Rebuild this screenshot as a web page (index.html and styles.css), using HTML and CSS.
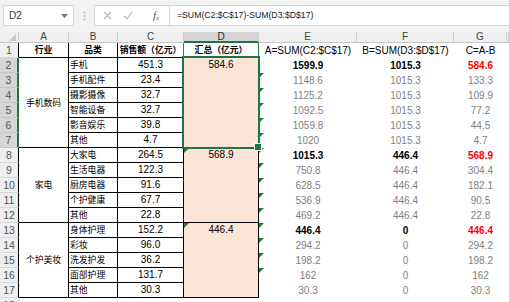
FILE: index.html
```html
<!DOCTYPE html>
<html lang="zh-CN">
<head>
    <meta charset="UTF-8">
    <title>汇总（亿元）</title>
    <link rel="stylesheet" href="styles.css">
</head>
<body>

<div class="toolbar">
    <div class="name-box">
        <span>D2</span>
        <svg width="7" height="4" viewBox="0 0 7 4"><path d="M0 0h7L3.5 4z" fill="#777"/></svg>
    </div>
    <div class="grip">
        <svg width="3" height="10" viewBox="0 0 3 10"><circle cx="1.5" cy="1.5" r="0.9" fill="#b5b5b5"/><circle cx="1.5" cy="5" r="0.9" fill="#b5b5b5"/><circle cx="1.5" cy="8.5" r="0.9" fill="#b5b5b5"/></svg>
    </div>
    <div class="fx-tools">
        <svg class="tool" width="9" height="9" viewBox="0 0 9 9"><path d="M1 1l7 7M8 1L1 8" stroke="#b8b8b8" stroke-width="1.1" fill="none"/></svg>
        <svg class="tool" width="10" height="9" viewBox="0 0 10 9"><path d="M1 5l3 3 5-7" stroke="#b8b8b8" stroke-width="1.1" fill="none"/></svg>
        <span class="fx"><i>f</i><sub>x</sub></span>
    </div>
    <div class="formula">=SUM(C2:$C$17)-SUM(D3:$D$17)</div>
</div>

<div class="sheet">
    <!-- column headers -->
    <div class="hd corner"><span class="corner-tri"></span></div>
    <div class="hd ca">A</div>
    <div class="hd cb">B</div>
    <div class="hd cc">C</div>
    <div class="hd cd on">D</div>
    <div class="hd ce">E</div>
    <div class="hd cf">F</div>
    <div class="hd cg">G</div>
    <div class="hd cx"></div>

    <!-- row 1 -->
    <div class="rh bdr">1</div>
    <div class="cell bd ca zh strong">行业</div>
    <div class="cell bd cb zh strong">品类</div>
    <div class="cell bd cc zh strong">销售额（亿元）</div>
    <div class="cell bd cd zh strong d1">汇总（亿元）</div>
    <div class="cell ce">A=SUM(C2:$C$17)</div>
    <div class="cell cf">B=SUM(D3:$D$17)</div>
    <div class="cell cg">C=A-B</div>

    <!-- 手机数码 -->
    <div class="rh on">2</div>
    <div class="cell bd ca zh group span6">手机数码</div>
    <div class="cell bd cb zh left">手机</div>
    <div class="cell bd cc">451.3</div>
    <div class="cell bd cd total span6 picked">584.6</div>
    <div class="cell ce strong">1599.9</div>
    <div class="cell cf strong">1015.3</div>
    <div class="cell cg strong red">584.6</div>

    <div class="rh on">3</div>
    <div class="cell bd cb zh left">手机配件</div>
    <div class="cell bd cc">23.4</div>
    <div class="cell ce grey flag">1148.6</div>
    <div class="cell cf grey">1015.3</div>
    <div class="cell cg grey">133.3</div>

    <div class="rh on">4</div>
    <div class="cell bd cb zh left">摄影摄像</div>
    <div class="cell bd cc">32.7</div>
    <div class="cell ce grey flag">1125.2</div>
    <div class="cell cf grey">1015.3</div>
    <div class="cell cg grey">109.9</div>

    <div class="rh on">5</div>
    <div class="cell bd cb zh left">智能设备</div>
    <div class="cell bd cc">32.7</div>
    <div class="cell ce grey flag">1092.5</div>
    <div class="cell cf grey">1015.3</div>
    <div class="cell cg grey">77.2</div>

    <div class="rh on">6</div>
    <div class="cell bd cb zh left">影音娱乐</div>
    <div class="cell bd cc">39.8</div>
    <div class="cell ce grey flag">1059.8</div>
    <div class="cell cf grey">1015.3</div>
    <div class="cell cg grey">44.5</div>

    <div class="rh on">7</div>
    <div class="cell bd cb zh left">其他</div>
    <div class="cell bd cc">4.7</div>
    <div class="cell ce grey flag">1020</div>
    <div class="cell cf grey">1015.3</div>
    <div class="cell cg grey">4.7</div>

    <!-- 家电 -->
    <div class="rh bdr">8</div>
    <div class="cell bd ca zh group span5">家电</div>
    <div class="cell bd cb zh left">大家电</div>
    <div class="cell bd cc">264.5</div>
    <div class="cell bd cd total span5 flag">568.9</div>
    <div class="cell ce strong flag">1015.3</div>
    <div class="cell cf strong">446.4</div>
    <div class="cell cg strong red">568.9</div>

    <div class="rh bdr">9</div>
    <div class="cell bd cb zh left">生活电器</div>
    <div class="cell bd cc">122.3</div>
    <div class="cell ce grey flag">750.8</div>
    <div class="cell cf grey">446.4</div>
    <div class="cell cg grey">304.4</div>

    <div class="rh bdr">10</div>
    <div class="cell bd cb zh left">厨房电器</div>
    <div class="cell bd cc">91.6</div>
    <div class="cell ce grey flag">628.5</div>
    <div class="cell cf grey">446.4</div>
    <div class="cell cg grey">182.1</div>

    <div class="rh bdr">11</div>
    <div class="cell bd cb zh left">个护健康</div>
    <div class="cell bd cc">67.7</div>
    <div class="cell ce grey flag">536.9</div>
    <div class="cell cf grey">446.4</div>
    <div class="cell cg grey">90.5</div>

    <div class="rh bdr">12</div>
    <div class="cell bd cb zh left">其他</div>
    <div class="cell bd cc">22.8</div>
    <div class="cell ce grey flag">469.2</div>
    <div class="cell cf grey">446.4</div>
    <div class="cell cg grey">22.8</div>

    <!-- 个护美妆 -->
    <div class="rh bdr">13</div>
    <div class="cell bd ca zh group span5">个护美妆</div>
    <div class="cell bd cb zh left">身体护理</div>
    <div class="cell bd cc">152.2</div>
    <div class="cell bd cd total span5 flag">446.4</div>
    <div class="cell ce strong flag">446.4</div>
    <div class="cell cf strong">0</div>
    <div class="cell cg strong red">446.4</div>

    <div class="rh bdr">14</div>
    <div class="cell bd cb zh left">彩妆</div>
    <div class="cell bd cc">96.0</div>
    <div class="cell ce grey flag">294.2</div>
    <div class="cell cf grey">0</div>
    <div class="cell cg grey">294.2</div>

    <div class="rh bdr">15</div>
    <div class="cell bd cb zh left">洗发护发</div>
    <div class="cell bd cc">36.2</div>
    <div class="cell ce grey flag">198.2</div>
    <div class="cell cf grey">0</div>
    <div class="cell cg grey">198.2</div>

    <div class="rh bdr">16</div>
    <div class="cell bd cb zh left">面部护理</div>
    <div class="cell bd cc">131.7</div>
    <div class="cell ce grey flag">162</div>
    <div class="cell cf grey">0</div>
    <div class="cell cg grey">162</div>

    <div class="rh bdr">17</div>
    <div class="cell bd cb zh left">其他</div>
    <div class="cell bd cc">30.3</div>
    <div class="cell ce grey">30.3</div>
    <div class="cell cf grey">0</div>
    <div class="cell cg grey">30.3</div>

    <div class="rh">18</div>
</div>

</body>
</html>
```

FILE: styles.css
```css
* {
    box-sizing: border-box;
}

body {
    margin: 0;
    width: 509px;
    height: 302px;
    overflow: hidden;
    background: #fff;
    font-family: "Liberation Sans", Arial, "Noto Sans CJK SC", sans-serif;
    color: #000;
}

/* formula bar */

.toolbar {
    display: flex;
    align-items: flex-start;
    height: 32px;
    padding: 5px 0 0 3px;
    background: #f3f3f3;
}

.name-box {
    width: 71px;
    height: 21px;
    display: flex;
    align-items: center;
    justify-content: space-between;
    padding: 0 5px 0 5px;
    background: #fff;
    border: 1px solid #d6d6d6;
    font-size: 10px;
    color: #333;
}

.grip {
    width: 20px;
    height: 21px;
    display: flex;
    align-items: center;
    justify-content: center;
}

.fx-tools {
    width: 76px;
    height: 21px;
    display: flex;
    align-items: center;
    padding-left: 8px;
    gap: 11px;
    background: #fff;
    border: 1px solid #d6d6d6;
}

.fx {
    margin-left: 9px;
    font-family: "Liberation Serif", serif;
    font-size: 11px;
    color: #555;
}

.fx sub {
    font-size: 7px;
    font-style: italic;
    vertical-align: -1px;
}

.formula {
    flex: 1;
    height: 21px;
    line-height: 19px;
    padding-left: 7px;
    background: #fff;
    border: 1px solid #d6d6d6;
    border-left: none;
    border-right: none;
    font-size: 8.7px;
    color: #222;
    white-space: nowrap;
}

/* sheet grid */

.sheet {
    display: grid;
    grid-template-columns: 19px 50px 49px 66px 75px 98px 97px 53px 2px;
    grid-template-rows: 11px repeat(18, 15px);
}

.hd {
    background: #efefef;
    border-right: 1px solid #d0d0d0;
    border-bottom: 1px solid #c6c6c6;
    font-size: 10px;
    line-height: 10px;
    text-align: center;
    color: #444;
}

.hd.on {
    background: #d4d4d4;
    border-bottom: 2px solid #217346;
    color: #2a2a2a;
}

.corner {
    position: relative;
}

.corner-tri {
    position: absolute;
    right: 2px;
    bottom: 1px;
    border-left: 7px solid transparent;
    border-bottom: 7px solid #c4c4c4;
}

.rh {
    grid-column: 1;
    background: #efefef;
    border-right: 1px solid #d0d0d0;
    border-bottom: 1px solid #d8d8d8;
    font-size: 10.5px;
    line-height: 14px;
    text-align: center;
    color: #555;
}

.rh.bdr {
    border-right-color: #000;
}

.rh.on {
    background: #d6d6d6;
    border-right: 2px solid #217346;
    border-bottom-color: #c6c6c6;
}

.ca { grid-column: 2; }
.cb { grid-column: 3; }
.cc { grid-column: 4; }
.cd { grid-column: 5; }
.ce { grid-column: 6; }
.cf { grid-column: 7; }
.cg { grid-column: 8; }
.cx { grid-column: 9; }

.span6 { grid-row: span 6; }
.span5 { grid-row: span 5; }

.cell {
    position: relative;
    font-size: 10px;
    line-height: 15px;
    text-align: center;
    white-space: nowrap;
}

.bd {
    border-right: 1px solid #000;
    border-bottom: 1px solid #000;
    line-height: 14px;
}

.zh {
    font-family: "Noto Sans CJK SC", sans-serif;
    font-size: 8.8px;
}

.left {
    text-align: left;
    padding-left: 1px;
}

.strong {
    font-weight: bold;
}

.group {
    display: flex;
    align-items: center;
    justify-content: center;
}

.total {
    background: #fce4d6;
}

.d1 {
    border-left: 1px solid #3d7a50;
    border-right-color: #3d7a50;
    margin-left: -1px;
}

.grey {
    color: #7f7f7f;
}

.red {
    color: #f00;
}

/* error indicators */

.flag::before {
    content: "";
    position: absolute;
    left: 0;
    top: 0;
    border-top: 5px solid #1e7b30;
    border-right: 5px solid transparent;
}

.cd.flag::before {
    left: 0;
}

/* current selection D2:D7 */

.picked::after {
    content: "";
    position: absolute;
    left: -2px;
    top: -2px;
    right: -2px;
    bottom: -2px;
    border: 2px solid #217346;
    z-index: 2;
}

.picked {
    z-index: 2;
}

.picked .handle,
.picked::before {
    content: "";
    position: absolute;
    right: -4px;
    bottom: -4px;
    width: 6px;
    height: 6px;
    background: #217346;
    border: 1px solid #fff;
    z-index: 3;
}
```
